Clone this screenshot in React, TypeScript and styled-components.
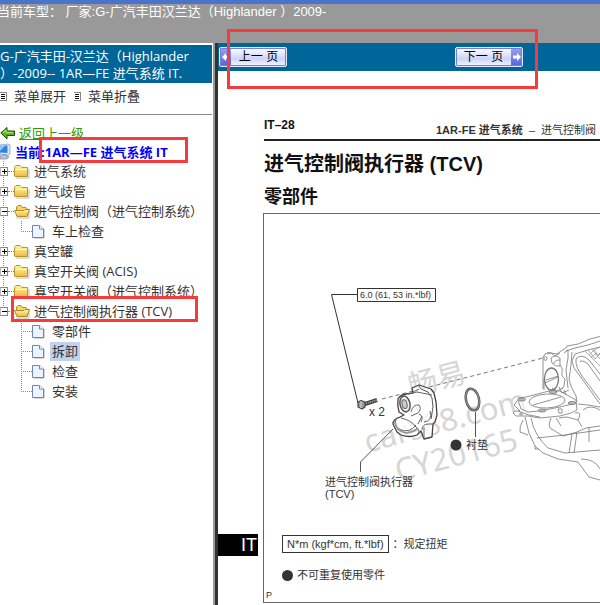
import React from "react";
import styled, { createGlobalStyle } from "styled-components";

const GlobalStyle = createGlobalStyle`
  * { box-sizing: border-box; }
  body {
    margin: 0;
    overflow: hidden;
    background: #fff;
    color: #333;
    font-family: "Open Sans", "Noto Sans CJK SC", sans-serif;
    font-size: 13px;
  }
  button { font: inherit; color: inherit; }
`;

const Page = styled.div`
  position: relative;
  display: flex;
  flex-direction: column;
  height: 100vh;
`;

const Header = styled.header`
  flex: none;
  height: 43px;
  padding: 0 1px;
  border-top: 4px solid #4a74cc;
  background: #999;
  color: #fff;
  font: 13px/15px "Liberation Sans", "Noto Sans CJK SC", sans-serif;
  white-space: pre;
  text-indent: -4px;
`;

const Body = styled.div`
  flex: 1;
  display: flex;
  min-height: 0;
`;

const Sidebar = styled.aside`
  flex: none;
  width: 218px;
  padding-top: 2px;
  border-right: 3px solid #333;
  box-shadow: inset -2px 0 #999;
  overflow: hidden;
`;

const SideTitle = styled.h1`
  margin: 0 5px 0 0;
  width: 212px;
  height: 38px;
  padding-top: 3px;
  background: #069;
  color: #fff;
  font-size: 13px;
  font-weight: 400;
  line-height: 17px;
  white-space: pre;
`;

const SideTools = styled.div`
  display: flex;
  align-items: center;
  gap: 8px;
  height: 32px;
  margin-right: 3px;
  padding-bottom: 5px;
  border-bottom: 1px solid #888;
`;

const ToolButton = styled.button`
  display: flex;
  align-items: center;
  gap: 7px;
  padding: 0;
  border: 0;
  background: none;
  line-height: 18px;
`;

const TreeNav = styled.nav`
  padding-top: 8px;
`;

const BackLink = styled.a`
  display: flex;
  align-items: center;
  gap: 4px;
  height: 19px;
  color: #390;
  text-decoration: underline;
`;

const Current = styled.div`
  position: relative;
  display: flex;
  align-items: center;
  gap: 4px;
  height: 19px;
  color: #00f;
  font-weight: 700;
  font-size: 13px;
  white-space: pre;
`;

const Marker = styled.span<{ $left: number; $width: number }>`
  position: absolute;
  z-index: 2;
  top: -5px;
  left: ${(p) => p.$left}px;
  width: ${(p) => p.$width}px;
  height: 26px;
  border: 3px solid #f93a3a;
  pointer-events: none;
`;

const PagerMarker = styled.span`
  position: absolute;
  z-index: 2;
  top: 29px;
  left: 227px;
  width: 311px;
  height: 60px;
  border: 3px solid #f93a3a;
  pointer-events: none;
`;

const List = styled.ul`
  margin: 0;
  padding: 0;
  list-style: none;
`;

const Row = styled.div`
  position: relative;
  display: flex;
  align-items: center;
  height: 20px;
  white-space: pre;
`;

const Trunk = styled.li<{ $last: boolean }>`
  background: repeating-linear-gradient(#888 0 1px, transparent 1px 2px) 3px 0 / 1px
    ${(p) => (p.$last ? "10px" : "100%")} no-repeat;
`;

const Toggle = styled.button`
  display: flex;
  width: 8px;
  height: 9px;
  padding: 0;
  border: 1px solid #888;
  border-left-color: #bbb;
  background: #fff;
`;

const Dash = styled.span<{ $width: number }>`
  width: ${(p) => p.$width}px;
  border-top: 1px dotted #888;
`;

const NodeLabel = styled.button<{ $selected?: boolean; $gap: number }>`
  height: 19px;
  margin-left: ${(p) => p.$gap}px;
  padding: 0 2px;
  border: 0;
  background: ${(p) => (p.$selected ? "#c1d2ee" : "transparent")};
  line-height: 18px;
`;

const Leaf = styled.li<{ $last: boolean }>`
  padding-left: 21px;
  background: repeating-linear-gradient(#888 0 1px, transparent 1px 2px) 21px 0 / 1px
    ${(p) => (p.$last ? "10px" : "100%")} no-repeat;
`;

const Main = styled.main`
  flex: 1;
  min-width: 0;
  overflow: hidden;
`;

const Pager = styled.div`
  display: flex;
  align-items: center;
  gap: 168px;
  height: 28px;
  padding-left: 1px;
  background: #069;
`;

const PageButton = styled.button<{ $next?: boolean }>`
  display: flex;
  flex: none;
  flex-direction: ${(p) => (p.$next ? "row-reverse" : "row")};
  width: 68px;
  height: 20px;
  padding: 0;
  border: 1px solid #e4e8ff;
  outline: 1px solid #7780cc;
  outline-offset: -2px;
  border-radius: 2px;
  background: linear-gradient(#fff, #ccd3fa 60%, #f4f6ff);
  color: #000;
  font: 12px/18px "Liberation Sans", "Noto Sans CJK SC", sans-serif;
  overflow: hidden;
`;

const PageButtonText = styled.span`
  flex: 1;
  white-space: pre;
`;

const ArrowCap = styled.span`
  display: flex;
  align-items: center;
  justify-content: center;
  width: 11px;
  height: 18px;
  background: linear-gradient(#96a3f5, #5463d6);
`;

const Sheet = styled.article`
  display: grid;
  grid-template-columns: 45px 1fr;
  padding-top: 47px;
  color: #111;
  font-family: "Liberation Sans", "Noto Sans CJK SC", sans-serif;
`;

const SheetHead = styled.header`
  grid-column: 2;
  display: flex;
  align-items: flex-start;
  height: 23px;
  margin-left: 1px;
  border-bottom: 2px solid #222;
  font-size: 11px;
  line-height: 15px;
  white-space: pre;
  overflow: hidden;
`;

const PageNo = styled.b`
  width: 172px;
  flex: none;
  font-size: 12px;
`;

const Running = styled.span`
  padding-top: 5px;
  color: #333;
`;

const SheetTitle = styled.h2`
  grid-column: 2;
  margin: 0 0 0 1px;
  padding-top: 9px;
  font-size: 20px;
  line-height: 28px;
  white-space: nowrap;
`;

const SheetSub = styled.h3`
  grid-column: 2;
  margin: 0 0 0 1px;
  height: 35px;
  padding-top: 7px;
  font-size: 18px;
  line-height: 24px;
`;

const SectionTab = styled.span`
  align-self: end;
  width: 40px;
  height: 22px;
  margin-bottom: 47px;
  padding-right: 1px;
  background: #000;
  color: #fff;
  font-size: 18px;
  line-height: 23px;
  text-align: right;
`;

const Figure = styled.figure`
  min-width: 0;
  margin: 0;
  border: 1px solid #666;
  border-right: 0;
  overflow: hidden;
`;

const Drawing = styled.svg`
  display: block;
`;

const Legend = styled.figcaption`
  display: flex;
  flex-direction: column;
  color: #333;
  font-size: 11px;
  line-height: 16px;
  padding-left: 18px;
  height: 67px;
`;

const LegendRow = styled.div`
  display: flex;
  align-items: center;
  gap: 4px;
  height: 18px;
  margin-bottom: 13px;
  white-space: pre;
`;

const Torque = styled.span`
  padding: 0 4px;
  border: 1px solid #333;
`;

const Dot = styled.span`
  width: 11px;
  height: 11px;
  border-radius: 50%;
  background: #333;
`;

const Corner = styled.span`
  margin: -8px 0 0 -16px;
  font-size: 9px;
  line-height: 12px;
`;

function MenuIcon() {
  return (
    <svg width="7" height="9" viewBox="0 0 7 9" shapeRendering="crispEdges">
      <rect x="0" y="0" width="7" height="9" fill="#888" />
      <rect x="0" y="1" width="6" height="7" fill="#fff" />
      <path d="M1 2.500H5M1 4.500H5M1 6.500H5" stroke="#111" />
    </svg>
  );
}

function FolderIcon({ open }: { open: boolean }) {
  return (
    <svg width="16" height="16" viewBox="0 0 16 16">
      <defs>
        <linearGradient id="folder" x2="0" y2="1">
          <stop stopColor="#fff5a8" />
          <stop offset="1" stopColor="#e9bd3f" />
        </linearGradient>
      </defs>
      <path d="M2 15H15V6" fill="none" stroke="#bbb" />
      {open ? (
        <>
          <path d="M2.500 12V4L4 2.500H7L8.500 4.500H12L13.500 6V13H3Z" fill="#f3d670" stroke="#b48b20" />
          <path d="M.5 7.500H10L11 6.500H15.500L13 13.500H3Z" fill="url(#folder)" stroke="#b48b20" />
        </>
      ) : (
        <>
          <path d="M.5 13V4.500L2 2.500H6L8 4.500H13.500V13.500H1Z" fill="url(#folder)" stroke="#bd942c" />
          <path d="M2 6.500H13" stroke="#fffbd0" />
        </>
      )}
    </svg>
  );
}

function FileIcon() {
  return (
    <svg width="13" height="16" viewBox="0 0 13 16">
      <path d="M2 15H12V6" fill="none" stroke="#aaa" />
      <path d="M.5 2.500H7.500L11.500 6V14.500H.5Z" fill="#eef4ff" stroke="#6d85b8" />
      <path d="M7.500 2.500V6H11.500" fill="#fff" stroke="#6d85b8" />
    </svg>
  );
}

function BackIcon() {
  return (
    <svg width="15" height="14" viewBox="0 0 15 14">
      <path d="M.8 7L7 1.500V5H14.500V9.500H7V13Z" fill="#59b51e" stroke="#17540a" />
      <path d="M3 6.600L6 4V6.600H13" fill="none" stroke="#c6ee72" />
    </svg>
  );
}

function ComputerIcon() {
  return (
    <svg width="11" height="17" viewBox="0 0 11 17">
      <path d="M0 2L8 1L10 2V11L8 12L0 11Z" fill="#dce7f7" stroke="#7b93bb" strokeWidth=".7" />
      <path d="M0 3L7.500 2.500V10L0 9.500Z" fill="#2f83e0" />
      <path d="M0 3L5 3L0 8Z" fill="#8dc3fa" />
      <path d="M2 12H7V13.500H9L7 16H0V13Z" fill="#b6c5dc" stroke="#7888a6" strokeWidth=".7" />
    </svg>
  );
}

function Arrow({ right }: { right?: boolean }) {
  return (
    <svg width="8" height="10" viewBox="0 0 8 10" fill="#fff">
      <path d={right ? "M8 5L4 1V3.400H0V6.600H4V9Z" : "M0 5L4 1V3.400H8V6.600H4V9Z"} />
    </svg>
  );
}

interface TreeNode {
  name: string;
  leaves?: string[];
  marked?: boolean;
}

const nodes: TreeNode[] = [
  { name: "进气系统" },
  { name: "进气歧管" },
  { name: "进气控制阀（进气控制系统）", leaves: ["车上检查"] },
  { name: "真空罐" },
  { name: "真空开关阀 (ACIS)" },
  { name: "真空开关阀（进气控制系统）" },
  { name: "进气控制阀执行器 (TCV)", leaves: ["零部件", "拆卸", "检查", "安装"], marked: true },
];

function Tree() {
  return (
    <List>
      {nodes.map((n, i) => (
        <Trunk key={n.name} $last={i === nodes.length - 1}>
          <Row>
            <Toggle aria-label={n.leaves ? "收起" : "展开"}>
              <svg width="6" height="7" viewBox="0 0 6 7" shapeRendering="crispEdges">
                <path d={n.leaves ? "M1 3.500H6" : "M1 3.500H6M3.500 1V6"} stroke="#000" />
              </svg>
            </Toggle>
            <Dash $width={6} />
            <FolderIcon open={!!n.leaves} />
            <NodeLabel $gap={2}>{n.name}</NodeLabel>
            {n.marked && <Marker $left={11} $width={187} />}
          </Row>
          {n.leaves && (
            <List>
              {n.leaves.map((leaf, j) => (
                <Leaf key={leaf} $last={j === n.leaves!.length - 1}>
                  <Row>
                    <Dash $width={11} />
                    <FileIcon />
                    <NodeLabel $gap={5} $selected={leaf === "拆卸"}>
                      {leaf}
                    </NodeLabel>
                  </Row>
                </Leaf>
              ))}
            </List>
          )}
        </Trunk>
      ))}
    </List>
  );
}

function PartsDrawing() {
  return (
    <Drawing width="336" height="321" viewBox="264 214 336 321" fill="none" stroke="#555" strokeLinejoin="round">
      <g
        fill="#d6d6d6"
        stroke="none"
        fontFamily="'Noto Sans', 'Noto Sans CJK SC', sans-serif"
        fontSize="31"
        transform="rotate(-15 370 450)"
      >
        <text x="424" y="409" fontSize="29">畅易</text>
        <text x="367" y="452">cars88.com</text>
        <text x="389" y="488">CY20165</text>
      </g>

      <g stroke="#333">
        <path d="M358 294.500H331.500L358 403" />
        <rect x="357.500" y="288.500" width="78" height="13" />
      </g>
      <path d="M382 399L543 358" strokeDasharray="4 3" stroke="#777" />

      <g stroke="#444">
        <path d="M365 404L377 400" stroke="#444" strokeWidth="4" />
        <path d="M366 403.500L377 400" stroke="#bbb" strokeWidth="1.500" strokeDasharray="1 1" />
        <path d="M358 402L361 400.500L365 402V407L362 409L358 407Z" fill="#999" strokeWidth="1.200" />
        <path d="M361 401V408" stroke="#ddd" />
      </g>

      <g stroke="#666">
        <path
          fill="#fff"
          fillOpacity=".75"
          stroke="#444"
          strokeWidth="1.300"
          d="M398 399Q400 395 406 394L413 393L412 388L419 385L431 389L434 393L436 402L437 415L435 422L433 424L432 437L424 439L421 431L417 435Q410 438 401 435L397 432L393 424Q393 419 400 417L404 415L399 412Q397 405 398 399Z"
        />
        <path d="M419 386L421 389L428 392L432 398L433 407L431 419" stroke="#555" />
        <path d="M408 394L417 392L432 395M413 392L419 389M430 411Q433 421 424 422" />
        <path d="M411 412Q413 404 419 405Q422 409 418 413L411 416M419 414Q424 416 421 422M418 424L422 416" />
        <path d="M396 420Q393 426 401 430Q410 433 416 425M401 418Q411 420 416 427Q420 430 419 433M422 430Q422 424 429 424L433 424M424 427V438" />
        <path d="M395 422Q396 431 406 433Q414 432 418 428" stroke="#999" strokeWidth="2" />
        <ellipse cx="405" cy="404" rx="5" ry="8" transform="rotate(-12 405 404)" fill="#eee" stroke="#555" strokeWidth="1.500" />
        <ellipse cx="404.500" cy="404" rx="2.500" ry="4.500" transform="rotate(-12 405 404)" fill="#ccc" />
      </g>

      <ellipse cx="472.500" cy="399.500" rx="6.500" ry="11" transform="rotate(-13 472.500 399.500)" strokeWidth="2.500" />
      <ellipse cx="472.500" cy="399.500" rx="6.500" ry="11" transform="rotate(-13 472.500 399.500)" stroke="#ccc" strokeWidth=".5" />
      <path d="M475.500 412V437M393 429L360.500 462V472" />

      <g stroke="#777" strokeWidth=".8">
        <path d="M543 389V357L545 354L548 352.500L557 354L561 351L566 348L567 346L578 344L590 339L600 336.500" />
        <path d="M566 351L575 348L588 345L600 341M564 353L568 350V358L566 370L568 388M572 352L571 365L569 379L571 386L576 396L577 402" />
        <path d="M544 390V379M547 354L551 353L555 356L560 353M560 365L562 368V376L565 379L564 386L562 389" />
        <ellipse cx="545.500" cy="358.500" rx="1.500" ry="2" />
        <path d="M551 358Q556 354 560 358V366Q555 367 552 363ZM554 364Q554 360 560 360" />
        <ellipse cx="551.500" cy="379" rx="7" ry="11" strokeWidth="1.300" />
        <path d="M545 383L558 377M546 380L558 376" />
        <path d="M600 347L588 350L575 354L572 361L574 368L585 383L600 404" />
        <path d="M600 374L589 360Q581 353 576 359Q575 366 582 376L600 400M600 381L588 364Q581 359 580 362" />
        <path
          d="M585 351L589 355L594 350L598 355L600 353M588 350L595 359L600 354M592 349L600 359M589 355L600 366M594 350L600 347M591 357L597 353"
          stroke="#999"
        />
        <path d="M514 405L517 401L519 398L526 397L549 391L560 391L576 400L577 410L571 413L560 416L540 418L528 416L516 416L513 413L515 411L520 411Z" fill="#fff" fillOpacity=".6" />
        <path d="M518 400L521 409L528 412L539 411L560 407L576 403M518 411L529 415L540 417" />
        <ellipse cx="547" cy="401" rx="18" ry="7" transform="rotate(-3 547 401)" />
        <path d="M533 405L561 397" />
        <g fill="#bbb">
          <ellipse cx="522" cy="399.500" rx="3.500" ry="1.500" />
          <ellipse cx="553" cy="392" rx="4" ry="1.500" />
          <ellipse cx="542" cy="410.500" rx="4" ry="1.500" />
          <ellipse cx="572" cy="403" rx="4" ry="1.500" />
        </g>
        <ellipse cx="521" cy="414" rx="1.500" ry="1" />
        <path d="M558 409H562V413H559ZM552 388L557 391L563 388M559 387L562 393L569 390M564 390L566 395" />
        <path d="M578 404L588 405L600 407M525 417L529 433L535 446L543 453L558 459L578 462L589 477L600 480M531 418Q534 435 548 448L565 453L600 450" />
        <path d="M523 420Q519 427 520 432L528 435M551 418Q548 425 550 428L563 436L577 432L586 428L600 426M556 418L561 426M575 413Q583 411 578 420L567 417L559 418M578 420L582 427M537 438L565 435L600 430M572 434L569 453M577 432L574 453M589 427V442M581 459Q595 459 600 469M535 446V449L539 449M583 410Q590 404 600 410" />
      </g>

      <g fill="#333" stroke="none" fontFamily="'Liberation Sans', 'Noto Sans CJK SC', sans-serif" fontSize="11">
        <text x="360" y="298" fontSize="9">6.0 (61, 53 in.*lbf)</text>
        <text x="369" y="416" fontSize="12">x 2</text>
        <circle cx="456" cy="445" r="5.500" />
        <text x="466" y="449">衬垫</text>
        <text x="325" y="486">进气控制阀执行器</text>
        <text x="325" y="498">(TCV)</text>
      </g>
    </Drawing>
  );
}

export default function App() {
  return (
    <Page>
      <GlobalStyle />
      <Header>当前车型： 厂家:G-广汽丰田汉兰达（Highlander ）2009-</Header>
      <Body>
        <Sidebar>
          <SideTitle>{"G-广汽丰田-汉兰达（Highlander\n）-2009-- 1AR—FE 进气系统 IT."}</SideTitle>
          <SideTools>
            <ToolButton>
              <MenuIcon />
              菜单展开
            </ToolButton>
            <ToolButton>
              <MenuIcon />
              菜单折叠
            </ToolButton>
          </SideTools>
          <TreeNav>
            <BackLink href="#back">
              <BackIcon />
              返回上一级
            </BackLink>
            <Current>
              <ComputerIcon />
              当前:1AR—FE 进气系统 IT
              <Marker $left={39} $width={149} />
            </Current>
            <Tree />
          </TreeNav>
        </Sidebar>
        <Main>
          <Pager>
            <PageButton>
              <ArrowCap>
                <Arrow />
              </ArrowCap>
              <PageButtonText>上一 页</PageButtonText>
            </PageButton>
            <PageButton $next>
              <ArrowCap>
                <Arrow right />
              </ArrowCap>
              <PageButtonText>下一 页</PageButtonText>
            </PageButton>
          </Pager>
          <Sheet>
            <SheetHead>
              <PageNo>IT–28</PageNo>
              <Running>
                <b>1AR-FE 进气系统</b>
                {"  –  进气控制阀"}
              </Running>
            </SheetHead>
            <SheetTitle>进气控制阀执行器 (TCV)</SheetTitle>
            <SheetSub>零部件</SheetSub>
            <SectionTab>IT</SectionTab>
            <Figure>
              <PartsDrawing />
              <Legend>
                <LegendRow>
                  <Torque>N*m (kgf*cm, ft.*lbf)</Torque>：规定扭矩
                </LegendRow>
                <LegendRow>
                  <Dot />
                  不可重复使用零件
                </LegendRow>
                <Corner>P</Corner>
              </Legend>
            </Figure>
          </Sheet>
        </Main>
      </Body>
      <PagerMarker />
    </Page>
  );
}
